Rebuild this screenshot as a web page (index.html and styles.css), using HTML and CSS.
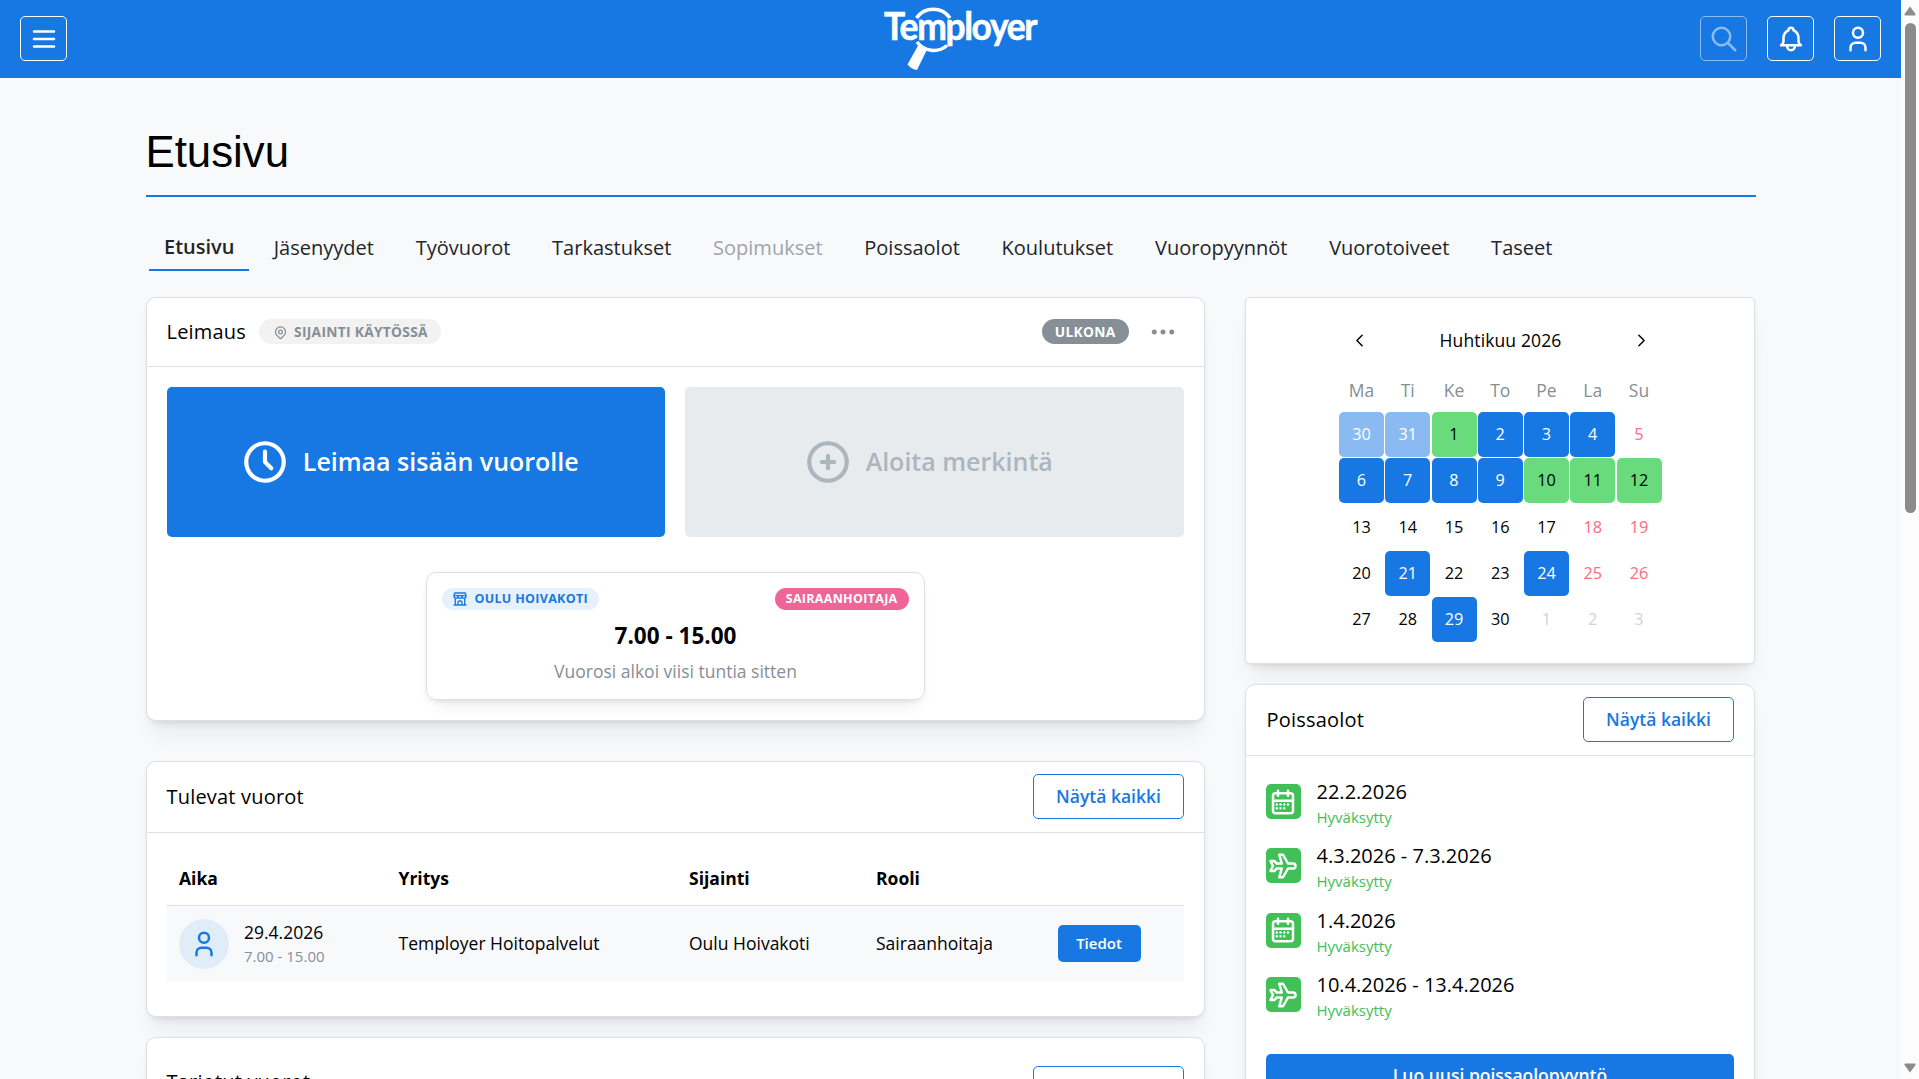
FILE: index.html
```html
<!DOCTYPE html>
<html lang="fi">
<head>
  <meta charset="UTF-8">
  <meta name="viewport" content="width=device-width, initial-scale=1.0">
  <title>Etusivu - Temployer</title>
  <link rel="stylesheet" href="styles.css">
</head>
<body>

  <!-- Shared icons -->
  <svg class="icon-defs" width="0" height="0">
    <symbol id="icon-menu" viewBox="0 0 24 24"><path d="M4 6h16M4 12h16M4 18h16"/></symbol>
    <symbol id="icon-search" viewBox="0 0 24 24"><circle cx="10" cy="10" r="7"/><path d="M21 21l-6-6"/></symbol>
    <symbol id="icon-bell" viewBox="0 0 24 24"><path d="M10 5a2 2 0 0 1 4 0a7 7 0 0 1 4 6v3a4 4 0 0 0 2 3h-16a4 4 0 0 0 2-3v-3a7 7 0 0 1 4-6M9 17v1a3 3 0 0 0 6 0v-1"/></symbol>
    <symbol id="icon-user" viewBox="0 0 24 24"><circle cx="12" cy="7" r="4"/><path d="M6 21v-2a4 4 0 0 1 4-4h4a4 4 0 0 1 4 4v2"/></symbol>
    <symbol id="icon-pin" viewBox="0 0 24 24"><circle cx="12" cy="11" r="3"/><path d="M17.657 16.657l-4.243 4.243a2 2 0 0 1-2.827 0l-4.244-4.243a8 8 0 1 1 11.314 0z"/></symbol>
    <symbol id="icon-dots" viewBox="0 0 24 24"><circle cx="5" cy="12" r="1"/><circle cx="12" cy="12" r="1"/><circle cx="19" cy="12" r="1"/></symbol>
    <symbol id="icon-clock" viewBox="0 0 24 24"><circle cx="12" cy="12" r="9"/><path d="M12 7v5l3 3"/></symbol>
    <symbol id="icon-plus" viewBox="0 0 24 24"><circle cx="12" cy="12" r="9"/><path d="M9 12h6M12 9v6"/></symbol>
    <symbol id="icon-store" viewBox="0 0 24 24"><path d="M3 21h18M3 7v1a3 3 0 0 0 6 0v-1m0 1a3 3 0 0 0 6 0v-1m0 1a3 3 0 0 0 6 0v-1h-18l1-4h16l1 4M5 21v-10.15M19 21v-10.15M9 21v-4a2 2 0 0 1 2-2h2a2 2 0 0 1 2 2v4"/></symbol>
    <symbol id="icon-left" viewBox="0 0 24 24"><path d="M15 6l-6 6l6 6"/></symbol>
    <symbol id="icon-right" viewBox="0 0 24 24"><path d="M9 6l6 6l-6 6"/></symbol>
    <symbol id="icon-calendar" viewBox="0 0 24 24"><path d="M4 7a2 2 0 0 1 2-2h12a2 2 0 0 1 2 2v12a2 2 0 0 1-2 2h-12a2 2 0 0 1-2-2zM16 3v4M8 3v4M4 11h16M7 14h.013M10.01 14h.005M13.01 14h.005M16.015 14h.005M13.015 17h.005M7.01 17h.005M10.01 17h.005"/></symbol>
    <symbol id="icon-plane" viewBox="0 0 24 24"><path d="M16 10h4a2 2 0 0 1 0 4h-4l-4 7h-3l2-7h-4l-2 2h-3l2-4l-2-4h3l2 2h4l-2-7h3z"/></symbol>
  </svg>

  <div class="page">
    <!-- Header -->
    <header class="header">
      <div class="header-side">
        <button class="icon-btn"><svg class="icon"><use href="#icon-menu"/></svg></button>
      </div>
      <svg class="logo" viewBox="0 0 160 72">
        <path class="lens" d="M36.500 18A20.500 20.500 0 0 1 70 18"/>
        <path class="lens" d="M37 42A20.500 20.500 0 0 0 67 45.500"/>
        <path class="handle" d="M39 44l8.500 4.500-10.500 21.500q-5-.5-9.500-5.500z"/>
        <text x="4" y="39.500" textLength="152" lengthAdjust="spacingAndGlyphs">Temployer</text>
      </svg>
      <div class="header-side header-right">
        <button class="icon-btn disabled"><svg class="icon"><use href="#icon-search"/></svg></button>
        <button class="icon-btn"><svg class="icon"><use href="#icon-bell"/></svg></button>
        <button class="icon-btn"><svg class="icon"><use href="#icon-user"/></svg></button>
      </div>
    </header>

    <main class="container">
      <h1>Etusivu</h1>

      <!-- Tabs -->
      <nav class="tabs">
        <a class="tab active">Etusivu</a>
        <a class="tab">Jäsenyydet</a>
        <a class="tab">Työvuorot</a>
        <a class="tab">Tarkastukset</a>
        <a class="tab disabled">Sopimukset</a>
        <a class="tab">Poissaolot</a>
        <a class="tab">Koulutukset</a>
        <a class="tab">Vuoropyynnöt</a>
        <a class="tab">Vuorotoiveet</a>
        <a class="tab">Taseet</a>
      </nav>

      <div class="columns">
        <div class="col-left">

          <!-- Clock in / out -->
          <section class="card clock-card">
            <div class="card-header">
              <h2>Leimaus</h2>
              <span class="badge badge-light"><svg class="icon"><use href="#icon-pin"/></svg>Sijainti käytössä</span>
              <span class="badge badge-gray">Ulkona</span>
              <svg class="icon dots"><use href="#icon-dots"/></svg>
            </div>
            <div class="clock-body">
              <div class="clock-buttons">
                <button class="big-btn"><svg class="icon"><use href="#icon-clock"/></svg><span>Leimaa sisään vuorolle</span></button>
                <button class="big-btn muted"><svg class="icon"><use href="#icon-plus"/></svg><span>Aloita merkintä</span></button>
              </div>
              <div class="shift">
                <div class="shift-top">
                  <span class="badge badge-sm badge-blue"><svg class="icon"><use href="#icon-store"/></svg>Oulu Hoivakoti</span>
                  <span class="badge badge-sm badge-pink">Sairaanhoitaja</span>
                </div>
                <div class="shift-time">7.00 - 15.00</div>
                <div class="shift-note">Vuorosi alkoi viisi tuntia sitten</div>
              </div>
            </div>
          </section>

          <!-- Upcoming shifts -->
          <section class="card upcoming-card">
            <div class="card-header">
              <h2>Tulevat vuorot</h2>
              <button class="outline-btn">Näytä kaikki</button>
            </div>
            <table class="shifts">
              <colgroup>
                <col class="c-time"><col class="c-company"><col class="c-place"><col class="c-role"><col>
              </colgroup>
              <thead>
                <tr><th>Aika</th><th>Yritys</th><th>Sijainti</th><th>Rooli</th><th></th></tr>
              </thead>
              <tbody>
                <tr>
                  <td>
                    <div class="time-cell">
                      <span class="avatar"><svg class="icon"><use href="#icon-user"/></svg></span>
                      <div>
                        <div class="date">29.4.2026</div>
                        <div class="hours">7.00 - 15.00</div>
                      </div>
                    </div>
                  </td>
                  <td>Temployer Hoitopalvelut</td>
                  <td>Oulu Hoivakoti</td>
                  <td>Sairaanhoitaja</td>
                  <td><button class="small-btn">Tiedot</button></td>
                </tr>
              </tbody>
            </table>
          </section>

          <!-- Offered shifts -->
          <section class="card offered-card">
            <div class="card-header">
              <h2>Tarjotut vuorot</h2>
              <button class="outline-btn">Näytä kaikki</button>
            </div>
          </section>
        </div>

        <div class="col-right">

          <!-- Calendar -->
          <section class="card calendar-card">
            <div class="calendar">
              <div class="month">
                <svg class="icon"><use href="#icon-left"/></svg>
                <span>Huhtikuu 2026</span>
                <svg class="icon"><use href="#icon-right"/></svg>
              </div>
              <div class="weekdays">
                <span>Ma</span><span>Ti</span><span>Ke</span><span>To</span><span>Pe</span><span>La</span><span>Su</span>
              </div>
              <div class="days">
                <span class="day shift-day past">30</span><span class="day shift-day past">31</span><span class="day free">1</span><span class="day shift-day">2</span><span class="day shift-day">3</span><span class="day shift-day">4</span><span class="day weekend">5</span>
                <span class="day shift-day">6</span><span class="day shift-day">7</span><span class="day shift-day">8</span><span class="day shift-day">9</span><span class="day free">10</span><span class="day free">11</span><span class="day free">12</span>
                <span class="day">13</span><span class="day">14</span><span class="day">15</span><span class="day">16</span><span class="day">17</span><span class="day weekend">18</span><span class="day weekend">19</span>
                <span class="day">20</span><span class="day shift-day">21</span><span class="day">22</span><span class="day">23</span><span class="day shift-day">24</span><span class="day weekend">25</span><span class="day weekend">26</span>
                <span class="day">27</span><span class="day">28</span><span class="day shift-day">29</span><span class="day">30</span><span class="day outside">1</span><span class="day outside">2</span><span class="day outside">3</span>
              </div>
            </div>
          </section>

          <!-- Absences -->
          <section class="card absence-card">
            <div class="card-header">
              <h2>Poissaolot</h2>
              <button class="outline-btn">Näytä kaikki</button>
            </div>
            <div class="absences">
              <div class="absence">
                <span class="absence-icon"><svg class="icon"><use href="#icon-calendar"/></svg></span>
                <div><div class="absence-date">22.2.2026</div><div class="status">Hyväksytty</div></div>
              </div>
              <div class="absence">
                <span class="absence-icon"><svg class="icon"><use href="#icon-plane"/></svg></span>
                <div><div class="absence-date">4.3.2026 - 7.3.2026</div><div class="status">Hyväksytty</div></div>
              </div>
              <div class="absence">
                <span class="absence-icon"><svg class="icon"><use href="#icon-calendar"/></svg></span>
                <div><div class="absence-date">1.4.2026</div><div class="status">Hyväksytty</div></div>
              </div>
              <div class="absence">
                <span class="absence-icon"><svg class="icon"><use href="#icon-plane"/></svg></span>
                <div><div class="absence-date">10.4.2026 - 13.4.2026</div><div class="status">Hyväksytty</div></div>
              </div>
              <button class="full-btn">Luo uusi poissaolopyyntö</button>
            </div>
          </section>
        </div>
      </div>
    </main>
  </div>

  <div class="scrollbar">
    <svg class="arrow" viewBox="0 0 12 10"><path d="M6 .5L11.500 8q.5 1.500-1 1.500h-9q-1.500 0-1-1.500z"/></svg>
    <div class="thumb"></div>
    <svg class="arrow down" viewBox="0 0 12 10"><path d="M6 .5L11.500 8q.5 1.500-1 1.500h-9q-1.500 0-1-1.500z"/></svg>
  </div>

</body>
</html>
```
FILE: styles.css
```css
* {
  box-sizing: border-box;
}
body {
  margin: 0;
  height: 100vh;
  display: flex;
  overflow: hidden;
  background: #f8f9fb;
  color: #000;
  font-family: "Open Sans", sans-serif;
  font-size: 17.5px;
  line-height: 1.55;
}
button {
  font-family: inherit;
  padding: 0;
  border: none;
  border-radius: 5px;
  cursor: pointer;
}
h1, h2 {
  margin: 0;
  font-weight: 400;
}
.icon-defs {
  display: none;
}
.icon {
  display: block;
  flex: none;
  width: 30px;
  height: 30px;
  fill: none;
  stroke: currentColor;
  stroke-width: 2;
  stroke-linecap: round;
  stroke-linejoin: round;
}
.page {
  flex: 1;
  min-width: 0;
  height: 100vh;
  overflow: hidden;
}

/* Header */
.header {
  display: flex;
  justify-content: space-between;
  height: 78px;
  padding: 0 20px;
  background: #1778e4;
}
.header-side {
  display: flex;
  flex: 1;
  padding-top: 16px;
  gap: 20px;
}
.header-right {
  justify-content: flex-end;
}
.icon-btn {
  display: flex;
  align-items: center;
  justify-content: center;
  width: 47px;
  height: 45px;
  border: 1px solid #fff;
  background: transparent;
  color: #fff;
}
.icon-btn.disabled {
  opacity: 0.5;
}
.logo {
  width: 160px;
  height: 72px;
  margin-left: 18px;
  overflow: visible;
}
.logo text {
  font-family: Lato, sans-serif;
  font-size: 39px;
  font-weight: 700;
  letter-spacing: -1.5px;
  fill: #fff;
  stroke: #fff;
  stroke-width: 0.6;
}
.lens {
  fill: none;
  stroke: #fff;
  stroke-width: 3.5;
}
.handle {
  fill: #fff;
}

.container {
  width: 1610px;
  margin: 0 auto;
  padding-top: 44px;
}
h1 {
  height: 75px;
  border-bottom: 2px solid #1778e4;
  font-family: "Liberation Sans", Arial, sans-serif;
  font-size: 43.75px;
  line-height: 59px;
}

/* Tabs */
.tabs {
  display: flex;
  height: 74px;
  padding-top: 35px;
  gap: 1.75px;
}
.tab {
  padding: 0 20px;
  color: #212529;
  font-size: 20px;
  line-height: 31px;
}
.tab.active {
  height: 39px;
  margin: 0 3px;
  padding: 0 14.5px 0 15.5px;
  border-bottom: 2px solid #1778e4;
  font-weight: 600;
  line-height: 29px;
}
.tab.disabled {
  color: #a0a4a8;
}

/* Cards */
.columns {
  display: grid;
  grid-template-columns: 1059px 510px;
  gap: 40px;
  margin-top: 26px;
}
.card {
  background: #fff;
  border: 1px solid #dee0e6;
  border-radius: 10px;
  box-shadow: 0 1px 4px rgba(0, 0, 0, 0.05), 0 20px 25px -6px rgba(0, 0, 0, 0.05), 0 9px 9px -6px rgba(0, 0, 0, 0.08);
}
.card-header {
  display: flex;
  align-items: center;
  height: 71px;
  padding: 0 20px 2px;
  border-bottom: 1px solid #dee0e6;
}
h2 {
  font-size: 20px;
  font-weight: 500;
  letter-spacing: 0.2px;
  line-height: 31px;
}
.outline-btn {
  width: 151px;
  height: 45px;
  margin-left: auto;
  padding-left: 1px;
  border: 1px solid #1778e4;
  background: #fff;
  color: #1778e4;
  font-size: 17.5px;
  font-weight: 600;
}
.badge {
  display: inline-flex;
  align-items: center;
  height: 25px;
  padding: 1px 13px 0;
  border-radius: 13px;
  font-size: 13.75px;
  font-weight: 700;
  letter-spacing: 0.3px;
  text-transform: uppercase;
}
.badge-light {
  margin-left: 13px;
  padding: 1px 13px 0 13.5px;
  background: #f2f2f2;
  color: #868e96;
}
.badge-light .icon {
  width: 15px;
  height: 15px;
  margin-right: 6.5px;
}
.badge-gray {
  margin-left: auto;
  background: #868e96;
  color: #fff;
}
.dots {
  margin: 1px 6px 0 19px;
  color: #868e96;
}
.badge-sm {
  height: 22px;
  padding: 0 11px;
  font-size: 12.5px;
}
.badge-blue {
  background: #e7f1fc;
  color: #1778e4;
}
.badge-blue .icon {
  width: 16px;
  height: 16px;
  margin: 0 7px 0 -1px;
}
.badge-pink {
  background: #f06595;
  color: #fff;
}

/* Clock card */
.clock-card {
  height: 424px;
}
.clock-card .card-header {
  height: 69px;
  padding-bottom: 1px;
}
.clock-body {
  padding: 20px;
}
.clock-buttons {
  display: flex;
  gap: 20px;
}
.big-btn {
  display: flex;
  flex: 1 1 0;
  align-items: center;
  justify-content: center;
  height: 150px;
  background: #1778e4;
  color: #fff;
  font-size: 25px;
  font-weight: 600;
}
.big-btn .icon {
  width: 50px;
  height: 50px;
}
.big-btn span {
  padding: 0 12.5px 2px;
}
.big-btn.muted {
  background: #e8ebee;
  color: #adb5bd;
}
.shift {
  width: 499px;
  height: 128px;
  margin: 35px auto 0;
  padding: 15px;
  border: 1px solid #dee0e6;
  border-radius: 10px;
  box-shadow: 0 1px 4px rgba(0, 0, 0, 0.05), 0 12px 18px -6px rgba(0, 0, 0, 0.06), 0 8px 9px -6px rgba(0, 0, 0, 0.05);
  text-align: center;
}
.shift-top {
  display: flex;
  justify-content: space-between;
}
.shift-time {
  margin-top: 8px;
  padding-left: 1px;
  font-size: 22.5px;
  font-weight: 700;
  line-height: 35px;
}
.shift-note {
  margin-top: 4px;
  padding-left: 1px;
  color: #868e96;
  line-height: 28px;
}

/* Upcoming shifts */
.upcoming-card {
  height: 256px;
  margin-top: 40px;
}
.shifts {
  width: 1017px;
  margin: 20px 0 0 20px;
  border-collapse: collapse;
  table-layout: fixed;
}
.c-time { width: 219.5px; }
.c-company { width: 290.5px; }
.c-place { width: 187px; }
.c-role { width: 181.5px; }
th, td {
  padding: 0 12.5px;
  text-align: left;
}
th {
  height: 52px;
  border-bottom: 1px solid #dee0e6;
  font-weight: 700;
}
td {
  height: 76px;
  background: #f8f9fb;
}
.time-cell {
  display: flex;
  align-items: center;
  gap: 15px;
}
.avatar {
  display: flex;
  align-items: center;
  justify-content: center;
  width: 50px;
  height: 50px;
  margin-top: 1px;
  border-radius: 50%;
  background: #e1ecf9;
  color: #1778e4;
}
.date {
  line-height: 26px;
}
.hours {
  color: #868e96;
  font-size: 15px;
  line-height: 23px;
}
.small-btn {
  display: block;
  width: 83px;
  height: 37px;
  padding-bottom: 1px;
  background: #1778e4;
  color: #fff;
  font-size: 15px;
  font-weight: 600;
}

/* Offered shifts */
.offered-card {
  height: 300px;
  margin-top: 20px;
}
.offered-card .card-header {
  align-items: flex-start;
  height: 102px;
  padding-top: 28px;
}

/* Calendar */
.calendar-card {
  height: 367px;
  padding-left: 2px;
  border-radius: 5px;
}
.calendar {
  width: 323px;
  margin: 20px auto 0;
}
.month {
  display: flex;
  align-items: center;
  justify-content: space-between;
  height: 45px;
  padding: 0 9.5px;
  font-weight: 500;
  letter-spacing: 0.12px;
}
.month .icon {
  width: 21px;
  height: 21px;
  stroke-width: 1.7;
}
.weekdays, .days {
  display: grid;
  grid-template-columns: repeat(7, 45px);
  column-gap: 1.25px;
}
.weekdays {
  padding: 14px 0 8px;
  color: #868e96;
  text-align: center;
}
.days {
  row-gap: 1.25px;
}
.day {
  height: 45px;
  border-radius: 5px;
  font-size: 16.25px;
  line-height: 45px;
  text-align: center;
}
.day.shift-day {
  background: #1778e4;
  color: #fff;
}
.day.past {
  opacity: 0.5;
}
.day.free {
  background: #69db7c;
}
.day.weekend {
  color: #ff6b81;
}
.day.outside {
  color: #ced4da;
}

/* Absences */
.absence-card {
  height: 450px;
  margin-top: 20px;
}
.absence-card h2 {
  padding-left: 1px;
}
.absences {
  padding: 20px;
}
.absence {
  display: flex;
  gap: 16px;
  height: 54px;
  margin-bottom: 10.4px;
}
.absence-icon {
  display: flex;
  align-items: center;
  justify-content: center;
  width: 35px;
  height: 35px;
  margin-top: 8px;
  border-radius: 5px;
  background: #40c057;
  color: #fff;
}
.absence-date {
  font-size: 20px;
  line-height: 31px;
}
.status {
  color: #40c057;
  font-size: 15px;
  line-height: 21px;
}
.full-btn {
  width: 100%;
  height: 45px;
  margin-top: 20px;
  padding: 0 0 2px 1px;
  background: #1778e4;
  color: #fff;
  font-size: 17.5px;
  font-weight: 600;
}

/* Scrollbar */
.scrollbar {
  display: flex;
  flex: none;
  flex-direction: column;
  align-items: center;
  width: 18px;
  height: 100vh;
  padding: 6px 0;
  background: #fcfcfc;
}
.thumb {
  width: 11px;
  height: 490px;
  margin-top: 7px;
  border-radius: 6px;
  background: #8b8b8b;
}
.arrow {
  width: 12px;
  height: 10px;
  fill: #8b8b8b;
}
.arrow.down {
  margin-top: auto;
  transform: rotate(180deg);
}
```
